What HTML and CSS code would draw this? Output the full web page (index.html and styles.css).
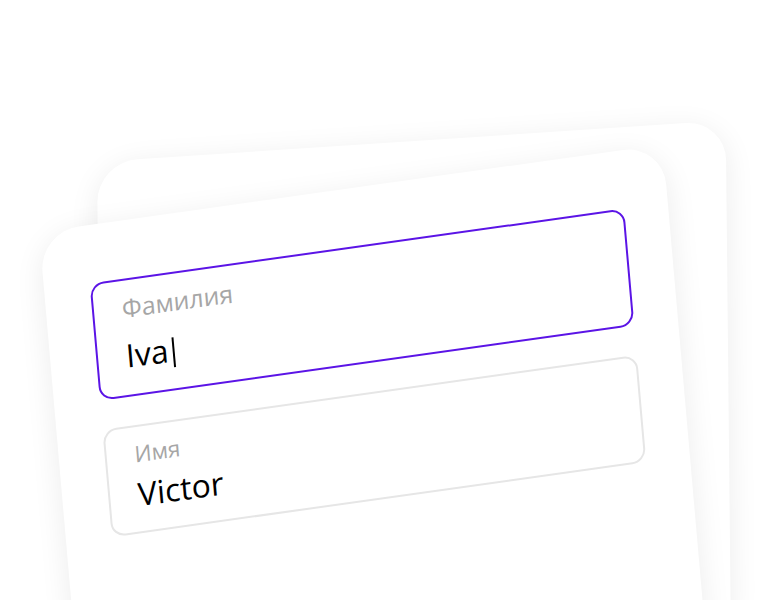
FILE: index.html
```html
<!DOCTYPE html>
<html lang="ru">
<head>
  <meta charset="UTF-8" />
  <meta name="viewport" content="width=device-width, initial-scale=1.0"/>
  <title>Форма</title>
  <link rel="stylesheet" href="styles.css">
</head>
<body>
  <div class="stage">
    <div class="card card-back"></div>
    <div class="card card-front">
      <div class="field field-active">
        <div class="field-label">Фамилия</div>
        <div class="field-value">Iva<span class="caret"></span></div>
      </div>
      <div class="field">
        <div class="field-label">Имя</div>
        <div class="field-value">Victor</div>
      </div>
    </div>
  </div>
</body>
</html>
```

FILE: styles.css
```css
body {
  margin: 0;
  background: #fff;
  font-family: 'Open Sans', 'Noto Sans', sans-serif;
}
.stage {
  position: relative;
  width: 760px;
  height: 600px;
  overflow: hidden;
}
.card {
  position: absolute;
  box-sizing: border-box;
  width: 630px;
  height: 520px;
  background: #fff;
  border-radius: 40px;
  transform-origin: 0 0;
  box-shadow: 0 6px 30px rgba(0, 0, 0, 0.08);
}
.card-back {
  left: 97px;
  top: 162px;
  transform: matrix(0.998, -0.066, 0.01, 1, 0, 0);
}
.card-front {
  left: 39px;
  top: 232px;
  transform: matrix(0.99, -0.139, 0.087, 0.996, 0, 0);
  display: flex;
  flex-direction: column;
  gap: 29px;
  padding: 58px 44px 0 46px;
}
.field {
  box-sizing: border-box;
  height: 108px;
  padding: 12px 28px 0;
  border: 2px solid #e6e6e6;
  border-radius: 14px;
}
.field-active {
  height: 118px;
  border-color: #5b14e6;
}
.field-label {
  font-size: 22.5px;
  line-height: 30px;
  color: #a6a6a6;
}
.field-active .field-label {
  font-size: 25px;
}
.field-value {
  margin-top: 5px;
  font-size: 32px;
  line-height: 40px;
  color: #000;
}
.field-active .field-value {
  margin-top: 13px;
}
.caret {
  display: inline-block;
  width: 2px;
  height: 30px;
  margin-left: 4px;
  background: #000;
  vertical-align: -6px;
}
```
